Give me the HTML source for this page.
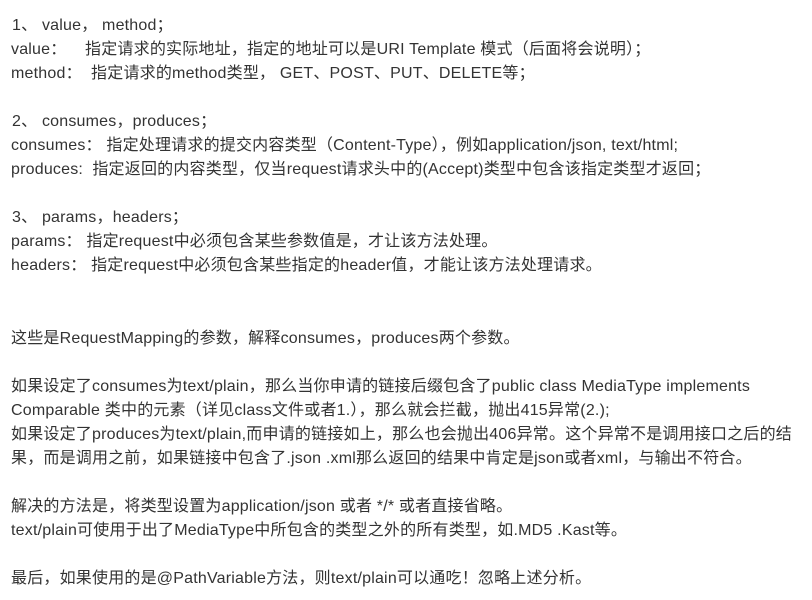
<!DOCTYPE html>
<html><head><meta charset="utf-8"><style>
body{margin:0;width:812px;height:600px;background:#fff;overflow:hidden;}
.l{position:absolute;left:11px;font:16px/24px "Liberation Sans","Noto Sans CJK SC",sans-serif;color:#333;white-space:pre;letter-spacing:0.2px;}
</style></head><body>
<div class="l" style="top:14px;left:12px">1、 value， method；</div>
<div class="l" style="top:38px">value：    指定请求的实际地址，指定的地址可以是URI Template 模式（后面将会说明）；</div>
<div class="l" style="top:62px">method：  指定请求的method类型， GET、POST、PUT、DELETE等；</div>
<div class="l" style="top:110px;left:12px">2、 consumes，produces；</div>
<div class="l" style="top:134px">consumes： 指定处理请求的提交内容类型（Content-Type），例如application/json, text/html;</div>
<div class="l" style="top:158px">produces:  指定返回的内容类型，仅当request请求头中的(Accept)类型中包含该指定类型才返回；</div>
<div class="l" style="top:206px;left:12px">3、 params，headers；</div>
<div class="l" style="top:230px">params： 指定request中必须包含某些参数值是，才让该方法处理。</div>
<div class="l" style="top:254px">headers： 指定request中必须包含某些指定的header值，才能让该方法处理请求。</div>
<div class="l" style="top:327px">这些是RequestMapping的参数，解释consumes，produces两个参数。</div>
<div class="l" style="top:375px">如果设定了consumes为text/plain，那么当你申请的链接后缀包含了public class MediaType implements</div>
<div class="l" style="top:399px">Comparable 类中的元素（详见class文件或者1.），那么就会拦截，抛出415异常(2.);</div>
<div class="l" style="top:423px">如果设定了produces为text/plain,而申请的链接如上，那么也会抛出406异常。这个异常不是调用接口之后的结</div>
<div class="l" style="top:447px">果，而是调用之前，如果链接中包含了.json .xml那么返回的结果中肯定是json或者xml，与输出不符合。</div>
<div class="l" style="top:495px">解决的方法是，将类型设置为application/json 或者 */* 或者直接省略。</div>
<div class="l" style="top:519px">text/plain可使用于出了MediaType中所包含的类型之外的所有类型，如.MD5 .Kast等。</div>
<div class="l" style="top:567px">最后，如果使用的是@PathVariable方法，则text/plain可以通吃！忽略上述分析。</div>
</body></html>
